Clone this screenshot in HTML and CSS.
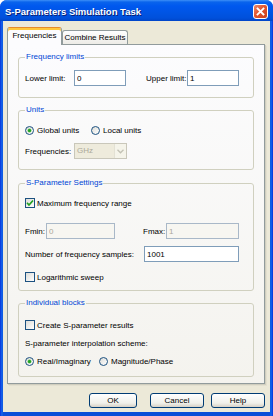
FILE: index.html
```html
<!DOCTYPE html>
<html lang="en">
<head>
    <meta charset="UTF-8">
    <title>S-Parameters Simulation Task</title>
    <link rel="stylesheet" href="styles.css">
</head>
<body>
    <div class="window">
        <div class="titlebar">
            <span class="title">S-Parameters Simulation Task</span>
            <div class="close">
                <svg width="13" height="13" viewBox="0 0 13 13"><path d="M3.5 3.5 L9.5 9.5 M9.5 3.5 L3.5 9.5" stroke="#fff" stroke-width="1.8" stroke-linecap="square"/></svg>
            </div>
        </div>

        <div class="client">
            <div class="tabs">
                <div class="tab active">Frequencies</div>
                <div class="tab">Combine Results</div>
            </div>

            <div class="panel">
                <fieldset class="group g1">
                    <legend>Frequency limits</legend>
                    <div class="row limits">
                        <span class="lbl w49">Lower limit:</span>
                        <input class="field w52" type="text" value="0">
                        <span class="lbl w41 push20">Upper limit:</span>
                        <input class="field w52" type="text" value="1">
                    </div>
                </fieldset>

                <fieldset class="group g2">
                    <legend>Units</legend>
                    <div class="opts units">
                        <span class="opt w66"><span class="radio on"></span>Global units</span>
                        <span class="opt"><span class="radio"></span>Local units</span>
                    </div>
                    <div class="row freq">
                        <span class="lbl w49">Frequencies:</span>
                        <div class="combo">
                            <span class="combo-text">GHz</span>
                            <span class="drop">
                                <svg width="7" height="5" viewBox="0 0 7 5"><path d="M0.5 0.8 L3.5 3.8 L6.5 0.8" fill="none" stroke="#C2C1B4" stroke-width="1.3"/></svg>
                            </span>
                        </div>
                    </div>
                </fieldset>

                <fieldset class="group g3">
                    <legend>S-Parameter Settings</legend>
                    <div class="opts maxrange">
                        <span class="opt"><span class="check on">
                            <svg width="8" height="8" viewBox="0 0 8 8"><path d="M1 3.8 L3 6 L7 1.5" fill="none" stroke="#21A121" stroke-width="1.7"/></svg>
                        </span>Maximum frequency range</span>
                    </div>
                    <div class="row fminmax">
                        <span class="lbl w21">Fmin:</span>
                        <input class="field w69" type="text" value="0" disabled>
                        <span class="lbl w23 push28">Fmax:</span>
                        <input class="field w73" type="text" value="1" disabled>
                    </div>
                    <div class="row samples">
                        <span class="lbl w119">Number of frequency samples:</span>
                        <input class="field w95" type="text" value="1001">
                    </div>
                    <div class="opts logsweep">
                        <span class="opt"><span class="check"></span>Logarithmic sweep</span>
                    </div>
                </fieldset>

                <fieldset class="group g4">
                    <legend>Individual blocks</legend>
                    <div class="opts create">
                        <span class="opt"><span class="check"></span>Create S-parameter results</span>
                    </div>
                    <div class="opts scheme">S-parameter interpolation scheme:</div>
                    <div class="opts interp">
                        <span class="opt w74"><span class="radio on"></span>Real/Imaginary</span>
                        <span class="opt"><span class="radio"></span>Magnitude/Phase</span>
                    </div>
                </fieldset>
            </div>

            <div class="buttons">
                <button class="btn ok">OK</button>
                <button class="btn cancel">Cancel</button>
                <button class="btn help">Help</button>
            </div>
        </div>
    </div>
</body>
</html>
```

FILE: styles.css
```css
* {
    box-sizing: border-box;
}
body {
    margin: 0;
    background: #fff;
    font-family: "Liberation Sans", Arial, sans-serif;
    font-size: 8px;
    color: #000;
}
.window {
    width: 273px;
    height: 416px;
    display: flex;
    flex-direction: column;
    background: linear-gradient(90deg, #0831D9, #166AEE 2px, #0A4FD8 3px, #0A4FD8 270px, #166AEE 271px, #0831D9);
    border-radius: 7px 7px 0 0;
}

/* title bar */
.titlebar {
    height: 21px;
    display: flex;
    align-items: center;
    padding: 1px 5px 0 5px;
    border-radius: 7px 7px 0 0;
    background: linear-gradient(#3D8FF7 0, #0A64EC 2px, #0058EE 6px, #0055E5 12px, #0050DB 18px, #0045C8 21px);
}
.title {
    flex: 1;
    color: #fff;
    font-weight: bold;
    font-size: 9.5px;
    text-shadow: 1px 1px 0 #0A1E74;
}
.close {
    width: 15px;
    height: 15px;
    border: 1px solid #fff;
    border-radius: 3px;
    background: linear-gradient(135deg, #E98A6E, #E2552E 45%, #C8401C);
    display: flex;
    align-items: center;
    justify-content: center;
}

/* client area */
.client {
    flex: 1;
    margin: 0 3px 4px;
    background: #ECE9D8;
    padding: 6px 5px 0 4px;
    display: flex;
    flex-direction: column;
}
.tabs {
    display: flex;
    align-items: flex-end;
    height: 17px;
}
.tab {
    height: 14px;
    width: 66px;
    border: 1px solid #919B9C;
    border-bottom: none;
    border-radius: 3px 3px 0 0;
    background: linear-gradient(#FFFFFF, #ECEBE6);
    text-align: center;
    line-height: 13px;
}
.tab.active {
    position: relative;
    z-index: 1;
    width: 55px;
    height: 18px;
    margin-bottom: -1px;
    background: #FCFCFE;
    border-top-color: #E68B2C;
    box-shadow: inset 0 2px 0 #FFC83C;
    line-height: 15px;
}
.panel {
    height: 340px;
    border: 1px solid #919B9C;
    background: linear-gradient(#FCFCFE, #F4F3EE);
    box-shadow: 1px 1px 0 #D0CEBF, 2px 2px 0 #E3E0D0;
    padding: 7px 10px 0 10px;
}

/* group boxes */
.group {
    margin: 0;
    border: 1px solid #D0D0BF;
    border-radius: 3px;
    padding: 0 6px;
}
.group legend {
    color: #0046D5;
    padding: 0 1px;
    line-height: 10px;
}
.g1 { padding-bottom: 11px; }
.g2 { margin-top: 7px; padding-bottom: 10px; }
.g3 { margin-top: 8px; padding-bottom: 7px; }
.g4 { margin-top: 7px; padding-bottom: 9px; }

.row {
    display: flex;
    align-items: center;
    height: 16px;
}
.opts {
    display: flex;
    align-items: center;
    height: 12px;
}
.limits { margin-top: 8px; }
.units { margin-top: 9px; }
.freq { margin-top: 7px; }
.maxrange { margin-top: 9px; }
.fminmax { margin-top: 14px; }
.samples { margin-top: 7px; }
.logsweep { margin-top: 9px; }
.create { margin-top: 11px; }
.scheme { margin-top: 6px; }
.interp { margin-top: 6px; }

.lbl { flex: none; }
.w21 { width: 21px; }
.w23 { width: 23px; }
.w41 { width: 41px; }
.w49 { width: 49px; }
.w52 { width: 52px; }
.w66 { width: 66px; }
.w69 { width: 69px; }
.w73 { width: 73px; }
.w74 { width: 74px; }
.w95 { width: 95px; }
.w119 { width: 119px; }
.push20 { margin-left: 20px; }
.push28 { margin-left: 28px; }

.field {
    height: 16px;
    margin: 0;
    border: 1px solid #7F9DB9;
    background: #fff;
    padding: 0 2px;
    font: inherit;
    color: #000;
    outline: none;
}
.field:disabled {
    background: #F7F6F1;
    color: #ACA899;
    border-color: #A9B8C8;
}

.combo {
    width: 53px;
    height: 16px;
    display: flex;
    border: 1px solid #C9C7BA;
    background: #EEEBDC;
}
.combo-text {
    flex: 1;
    color: #ACA899;
    padding-left: 2px;
    line-height: 14px;
}
.drop {
    width: 12px;
    display: flex;
    align-items: center;
    justify-content: center;
    background: #F5F4EA;
    border-left: 1px solid #E3E1D4;
}

.opt {
    display: flex;
    align-items: center;
}
.radio {
    width: 9px;
    height: 9px;
    border-radius: 50%;
    border: 1px solid #1C5180;
    background: linear-gradient(135deg, #DCDCD7, #FFFFFF);
    margin-right: 3px;
    display: flex;
    align-items: center;
    justify-content: center;
}
.radio.on::after {
    content: "";
    width: 3px;
    height: 3px;
    border-radius: 50%;
    background: #21A121;
    box-shadow: 0 0 0 0.5px #5EC85E;
}
.check {
    width: 10px;
    height: 10px;
    border: 1px solid #1C5180;
    background: linear-gradient(135deg, #DCDCD7, #FFFFFF);
    margin-right: 2px;
    display: flex;
    align-items: center;
    justify-content: center;
}

/* dialog buttons */
.buttons {
    display: flex;
    justify-content: flex-end;
    margin-top: 9px;
}
.btn {
    height: 15px;
    margin: 0;
    padding: 0;
    border: 1px solid #003C74;
    border-radius: 3px;
    background: linear-gradient(#FFFFFF, #F0F0EA 70%, #D6D0C5);
    font: inherit;
    color: #000;
}
.ok { width: 48px; margin-right: 13px; }
.cancel { width: 54px; margin-right: 7px; }
.help { width: 54px; }
```
